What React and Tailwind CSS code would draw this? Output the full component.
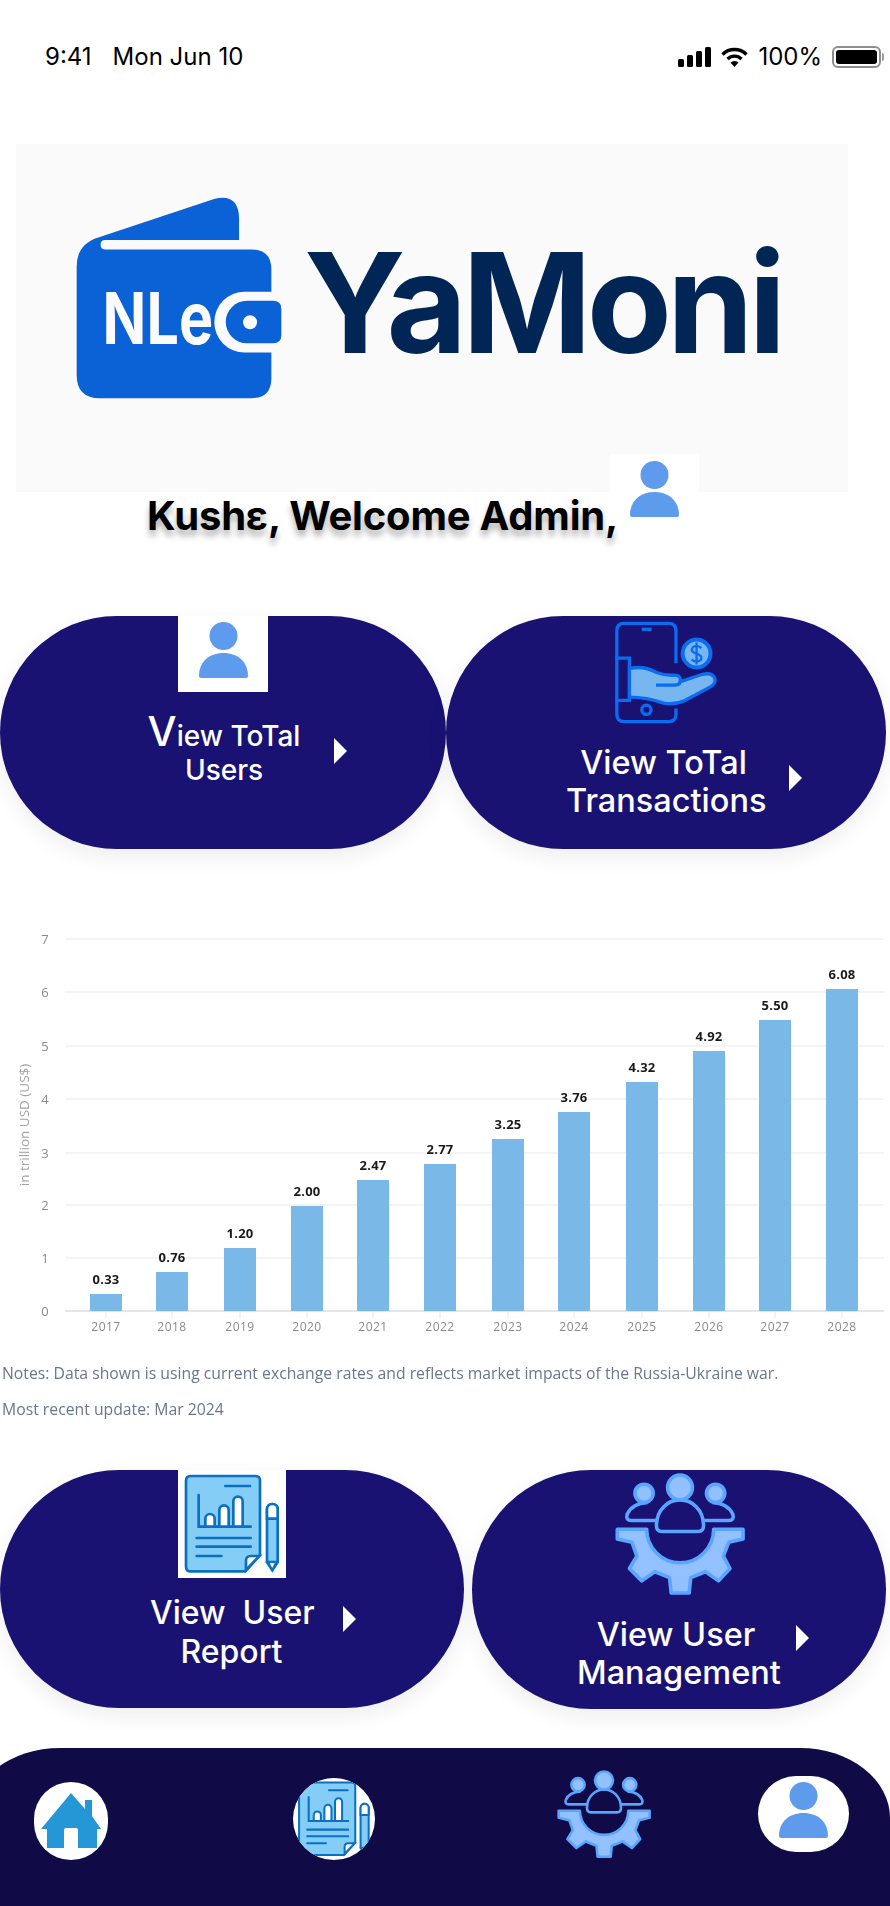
const Arrow = () => (
  <svg width="13" height="26" viewBox="0 0 13 26" className="shrink-0">
    <polygon points="0,0 13,13 0,26" fill="#ffffff" />
  </svg>
);

const SignalIcon = () => (
  <svg width="33" height="20" viewBox="0 0 33 20">
    <rect x="0" y="12" width="6" height="8" rx="1.5" fill="#000" />
    <rect x="9" y="8" width="6" height="12" rx="1.5" fill="#000" />
    <rect x="18" y="4" width="6" height="16" rx="1.5" fill="#000" />
    <rect x="27" y="0" width="6" height="20" rx="1.5" fill="#000" />
  </svg>
);

const WifiIcon = () => (
  <svg width="27" height="20" viewBox="0 0 27 20" fill="none">
    <path d="M1.5 7.5 A17 17 0 0 1 25.5 7.5" stroke="#000" strokeWidth="3.4" />
    <path d="M6.5 12 A10 10 0 0 1 20.5 12" stroke="#000" strokeWidth="3.4" />
    <path d="M13.5 20 L9.5 15.5 A6 6 0 0 1 17.5 15.5 Z" fill="#000" />
  </svg>
);

const BatteryIcon = () => (
  <div className="flex items-center">
    <div className="w-[49px] h-[22px] rounded-[6px] border-2 border-[#8e8e8e] p-[2px]">
      <div className="w-full h-full rounded-[3px] bg-black" />
    </div>
    <div className="w-[2px] h-[8px] rounded-r-sm bg-[#9a9a9a] ml-[1px]" />
  </div>
);

const WalletLogo = () => (
  <svg width="208" height="205" viewBox="45 45 625 615" className="shrink-0">
    <path
      d="M50 260 Q50 192 115 172 L465 56 Q535 40 538 112 V180 H135 Q122 180 122 194 Q122 208 135 208 H575 Q635 208 635 268 V335 H555 A91 91 0 0 0 555 518 H635 V595 Q635 655 575 655 H120 Q50 655 50 585 Z"
      fill="#0b61d6"
    />
    <path d="M562 362 H640 Q665 362 665 386 V466 Q665 490 640 490 H562 A64 64 0 0 1 562 362 Z" fill="#0b61d6" />
    <circle cx="571" cy="427" r="21" fill="#fbfbfb" />
    <text
      x="128"
      y="491"
      fontFamily="Inter, sans-serif"
      fontWeight="700"
      fontSize="216"
      fill="#fbfbfb"
      textLength="332"
      lengthAdjust="spacingAndGlyphs"
    >
      NLe
    </text>
  </svg>
);

const PersonIcon = () => (
  <svg width="49" height="56" viewBox="0 0 49 56">
    <ellipse cx="24.5" cy="14" rx="14" ry="14" fill="#5f9bec" />
    <path d="M0 54 C0 40 10 31 24.5 31 C39 31 49 40 49 54 Q49 56 47 56 H2 Q0 56 0 54 Z" fill="#5f9bec" />
  </svg>
);

const PhoneHandIcon = () => (
  <svg width="102" height="103" viewBox="45 33 306 310" fill="none" stroke="#0a6cf0" strokeWidth="10">
    <path d="M228 160 V62 Q228 40 206 40 H72 Q50 40 50 62 V145" />
    <path d="M50 272 V314 Q50 336 72 336 H206 Q228 336 228 314 V296" />
    <path d="M125 58 H155" />
    <circle cx="139" cy="300" r="14" />
    <path d="M50 145 H88 V272 H50 Z" />
    <path
      d="M88 176 Q130 166 170 188 Q195 198 225 196 Q246 198 240 216 L305 194 Q338 186 345 206 Q349 222 330 232 L255 272 Q225 286 190 280 Q140 262 88 262 Z"
      fill="#77b6ee"
    />
    <path d="M168 226 H222 Q240 226 240 216" />
    <circle cx="290" cy="131" r="42" fill="#77b6ee" strokeWidth="12" />
    <path d="M305 115 Q290 102 278 113 Q270 125 290 131 Q310 138 303 150 Q290 161 275 149 M290 98 V164" strokeWidth="7" />
  </svg>
);

const ReportIcon = ({ size = 108 }) => (
  <svg width={size} height={size} viewBox="24 30 324 324" fill="none" stroke="#0b6fc2" strokeWidth="8" strokeLinecap="round">
    <path d="M62 48 H256 Q270 48 270 62 V285 L226 334 H62 Q48 334 48 320 V62 Q48 48 62 48 Z" fill="#83cdf7" />
    <path d="M228 330 V302 Q228 288 242 288 H268 Z" fill="#f5fbff" />
    <path d="M166 78 H240" />
    <path d="M86 105 V200 H242" />
    <path d="M106 200 V176 A14 14 0 0 1 134 176 V200 Z" fill="#ffffff" />
    <path d="M148 200 V150 A14 14 0 0 1 176 150 V200 Z" fill="#ffffff" />
    <path d="M190 200 V124 A14 14 0 0 1 218 124 V200 Z" fill="#ffffff" />
    <path d="M80 234 H242" />
    <path d="M80 260 H242" />
    <path d="M80 288 H154" />
    <path d="M291 148 A16 16 0 0 1 323 148 V306 L307 331 L291 306 Z" fill="#83cdf7" />
    <path d="M291 148 A16 16 0 0 1 323 148 V176 H291 Z" fill="#ffffff" />
    <path d="M291 306 H323" />
    <path d="M298 308 H316 L307 326 Z" fill="#ffffff" strokeWidth="3" />
  </svg>
);

const GearTeamIcon = ({ width = 130, height = 123 }) => (
  <svg width={width} height={height} viewBox="68 38 398 376" fill="none" stroke="#5aa5ff" strokeWidth="11" strokeLinejoin="round">
    <circle cx="267" cy="82" r="38" fill="#93c0ff" />
    <circle cx="157" cy="100" r="28" fill="#93c0ff" />
    <circle cx="376" cy="100" r="28" fill="#93c0ff" />
    <path d="M196 183 H118 Q100 183 105 165 Q120 130 168 128" />
    <path d="M338 183 H416 Q434 183 429 165 Q414 130 366 128" />
    <path d="M212 217 Q194 217 195 196 C196 150 230 120 267 120 C304 120 338 150 339 196 Q340 217 322 217 Z" />
    <path
      d="M75 210 H165 A102 102 0 0 0 370 210 H460 V240 L416 250 L400 292 L420 330 L385 368 L345 340 L300 358 L295 405 L240 405 L235 358 L190 340 L150 368 L112 330 L135 292 L120 250 L75 240 Z"
      fill="#93c0ff"
    />
  </svg>
);

const HomeIcon = () => (
  <svg width="74" height="78" viewBox="34 1782 74 78">
    <path
      d="M71 1793 L85 1809 V1800 H92 V1816 L101 1829 L97 1829 V1848 H78 V1830 Q78 1828 76 1828 H66 Q64 1828 64 1830 V1848 H47 V1829 H41 Z"
      fill="#2596d6"
    />
  </svg>
);

const bars = [
  { year: 2017, value: '0.33', x: 90, top: 1294 },
  { year: 2018, value: '0.76', x: 156, top: 1272 },
  { year: 2019, value: '1.20', x: 224, top: 1248 },
  { year: 2020, value: '2.00', x: 291, top: 1206 },
  { year: 2021, value: '2.47', x: 357, top: 1180 },
  { year: 2022, value: '2.77', x: 424, top: 1164 },
  { year: 2023, value: '3.25', x: 492, top: 1139 },
  { year: 2024, value: '3.76', x: 558, top: 1112 },
  { year: 2025, value: '4.32', x: 626, top: 1082 },
  { year: 2026, value: '4.92', x: 693, top: 1051 },
  { year: 2027, value: '5.50', x: 759, top: 1020 },
  { year: 2028, value: '6.08', x: 826, top: 989 },
];

const gridLines = [
  { label: 0, y: 1311 },
  { label: 1, y: 1258 },
  { label: 2, y: 1205 },
  { label: 3, y: 1153 },
  { label: 4, y: 1099 },
  { label: 5, y: 1046 },
  { label: 6, y: 992 },
  { label: 7, y: 939 },
];

const Chart = () => (
  <svg width="890" height="415" viewBox="0 930 890 415" className="block blur-[0.4px]" fontFamily="'Open Sans', sans-serif">
    {gridLines.map((g) => (
      <g key={g.label}>
        <line x1="65" x2="884" y1={g.y} y2={g.y} stroke={g.label === 0 ? '#e3e6ec' : '#f0f0f2'} strokeWidth={g.label === 0 ? 2 : 1.5} />
        <text x="45" y={g.y + 4.5} textAnchor="middle" fontSize="13" fill="#8a8a8a">{g.label}</text>
      </g>
    ))}
    <text transform="translate(29 1125) rotate(-90)" textAnchor="middle" fontSize="13.5" fill="#a3a3a3">in trillion USD (US$)</text>
    {bars.map((b) => (
      <g key={b.year}>
        <rect x={b.x} y={b.top} width="32" height={1311 - b.top} fill="#7ab8e8" />
        <text x={b.x + 16} y={b.top - 10} textAnchor="middle" fontSize="13" fontWeight="700" fill="#1a1a1a" letterSpacing="0.2">{b.value}</text>
        <line x1={b.x + 16} x2={b.x + 16} y1="1312" y2="1318" stroke="#e3e6ec" />
        <text x={b.x + 16} y="1331" textAnchor="middle" fontSize="12" fill="#8a8a8a" letterSpacing="0.5">{b.year}</text>
      </g>
    ))}
  </svg>
);

const App = () => {
  return (
    <div className="w-[890px] h-[1906px] overflow-hidden bg-white flex flex-col font-['Inter',sans-serif]">
      {/* status bar */}
      <div className="h-[144px] shrink-0 flex items-start justify-between pt-[43px] pl-[45px] pr-[6px] text-[24px] leading-[28px] text-black">
        <div className="flex gap-[21px]">
          <span>9:41</span>
          <span>Mon Jun 10</span>
        </div>
        <div className="flex items-center gap-[10px]">
          <SignalIcon />
          <WifiIcon />
          <span>100%</span>
          <BatteryIcon />
        </div>
      </div>

      {/* logo */}
      <div className="ml-[16px] w-[832px] h-[348px] shrink-0 bg-[#fafafa] flex items-start pl-[59px] pt-[51px]">
        <WalletLogo />
        <span className="ml-[21px] mt-[28px] text-[139px] leading-[160px] font-bold tracking-[-5px] text-[#012555]">YaMoni</span>
      </div>

      {/* welcome */}
      <div className="-mt-[38px] h-[162px] shrink-0 flex items-start pl-[147px]">
        <span className="relative z-10 mt-[38px] text-[40px] leading-[48px] font-bold tracking-[-0.2px] text-black [text-shadow:0_6px_6px_rgba(0,0,0,0.3)]">Kushɛ, Welcome Admin,</span>
        <div className="ml-[-8px] w-[89px] h-[89px] bg-white flex justify-center pt-[7px]">
          <PersonIcon />
        </div>
      </div>

      {/* top actions */}
      <div className="flex shrink-0">
        <div className="w-[446px] h-[233px] rounded-[117px] bg-[#1a1272] shadow-[0_8px_22px_rgba(0,0,0,0.07)] flex flex-col pl-[147px]">
          <div className="ml-[31px] w-[90px] h-[76px] bg-white flex justify-center pt-[6px]">
            <PersonIcon />
          </div>
          <div className="mt-[22px] flex items-start text-white font-medium text-[28px] leading-[34px]">
            <div className="w-[154px] text-center">
              <div className="whitespace-nowrap"><span className="text-[41px] leading-[34px]">V</span>iew ToTal</div>
              <div>Users</div>
            </div>
            <div className="ml-[33px] mt-[24px]"><Arrow /></div>
          </div>
        </div>
        <div className="w-[440px] h-[233px] rounded-[117px] bg-[#1a1272] shadow-[0_8px_22px_rgba(0,0,0,0.07)] flex flex-col pl-[122px]">
          <div className="ml-[47px] mt-[5px]"><PhoneHandIcon /></div>
          <div className="mt-[20px] flex items-start text-white font-medium text-[32.5px] leading-[38px]">
            <div className="w-[199px] text-center whitespace-nowrap -ml-[2px]">
              <div className="pr-[4px]">View ToTal</div>
              <div>Transactions</div>
            </div>
            <div className="ml-[24px] mt-[21px]"><Arrow /></div>
          </div>
        </div>
      </div>

      {/* chart */}
      <div className="mt-[81px] shrink-0"><Chart /></div>
      <div className="pl-[2px] mt-[18px] h-[107px] shrink-0 text-[15.75px] leading-[20px] text-[#68778f] font-['Open_Sans',sans-serif] blur-[0.3px]">
        <p className="whitespace-nowrap">Notes: Data shown is using current exchange rates and reflects market impacts of the Russia-Ukraine war.</p>
        <p className="mt-[16px]">Most recent update: Mar 2024</p>
      </div>

      {/* bottom actions */}
      <div className="flex gap-[8px] shrink-0 items-start">
        <div className="w-[464px] h-[238px] rounded-[119px] bg-[#1a1272] shadow-[0_8px_22px_rgba(0,0,0,0.07)] flex flex-col pl-[150px]">
          <div className="ml-[28px] bg-white w-[108px] h-[108px]"><ReportIcon /></div>
          <div className="mt-[15px] flex items-start text-white font-medium text-[32px] leading-[39px]">
            <div className="w-[163px] text-center whitespace-pre">
              <div>View  User</div>
              <div>Report</div>
            </div>
            <div className="ml-[30px] mt-[13px]"><Arrow /></div>
          </div>
        </div>
        <div className="w-[414px] h-[239px] rounded-[119px] bg-[#1a1272] shadow-[0_8px_22px_rgba(0,0,0,0.07)] flex flex-col pl-[105px]">
          <div className="ml-[38px] mt-[3px]"><GearTeamIcon /></div>
          <div className="mt-[20px] flex items-start text-white font-medium text-[32.5px] leading-[38px]">
            <div className="w-[203px] text-center whitespace-nowrap">
              <div className="pr-[5px]">View User</div>
              <div>Management</div>
            </div>
            <div className="ml-[16px] mt-[9px]"><Arrow /></div>
          </div>
        </div>
      </div>

      {/* nav */}
      <div className="mt-[39px] -ml-[30px] w-[920px] flex-1 bg-[#100b47] rounded-t-[90px_70px] relative">
        <div className="flex items-start pl-[64px] pt-[22px]">
          <div className="mt-[12px] w-[74px] h-[78px] rounded-full bg-white shrink-0"><HomeIcon /></div>
          <div className="ml-[185px] mt-[8px] w-[82px] h-[82px] rounded-full bg-white overflow-hidden shrink-0 flex items-center justify-center"><ReportIcon size={84} /></div>
          <div className="ml-[182px] shrink-0"><GearTeamIcon width={94} height={89} /></div>
          <div className="ml-[107px] mt-[6px] w-[91px] h-[76px] rounded-full bg-white shrink-0 flex justify-center pt-[6px]">
            <PersonIcon />
          </div>
        </div>
      </div>
    </div>
  );
};

export default App;
